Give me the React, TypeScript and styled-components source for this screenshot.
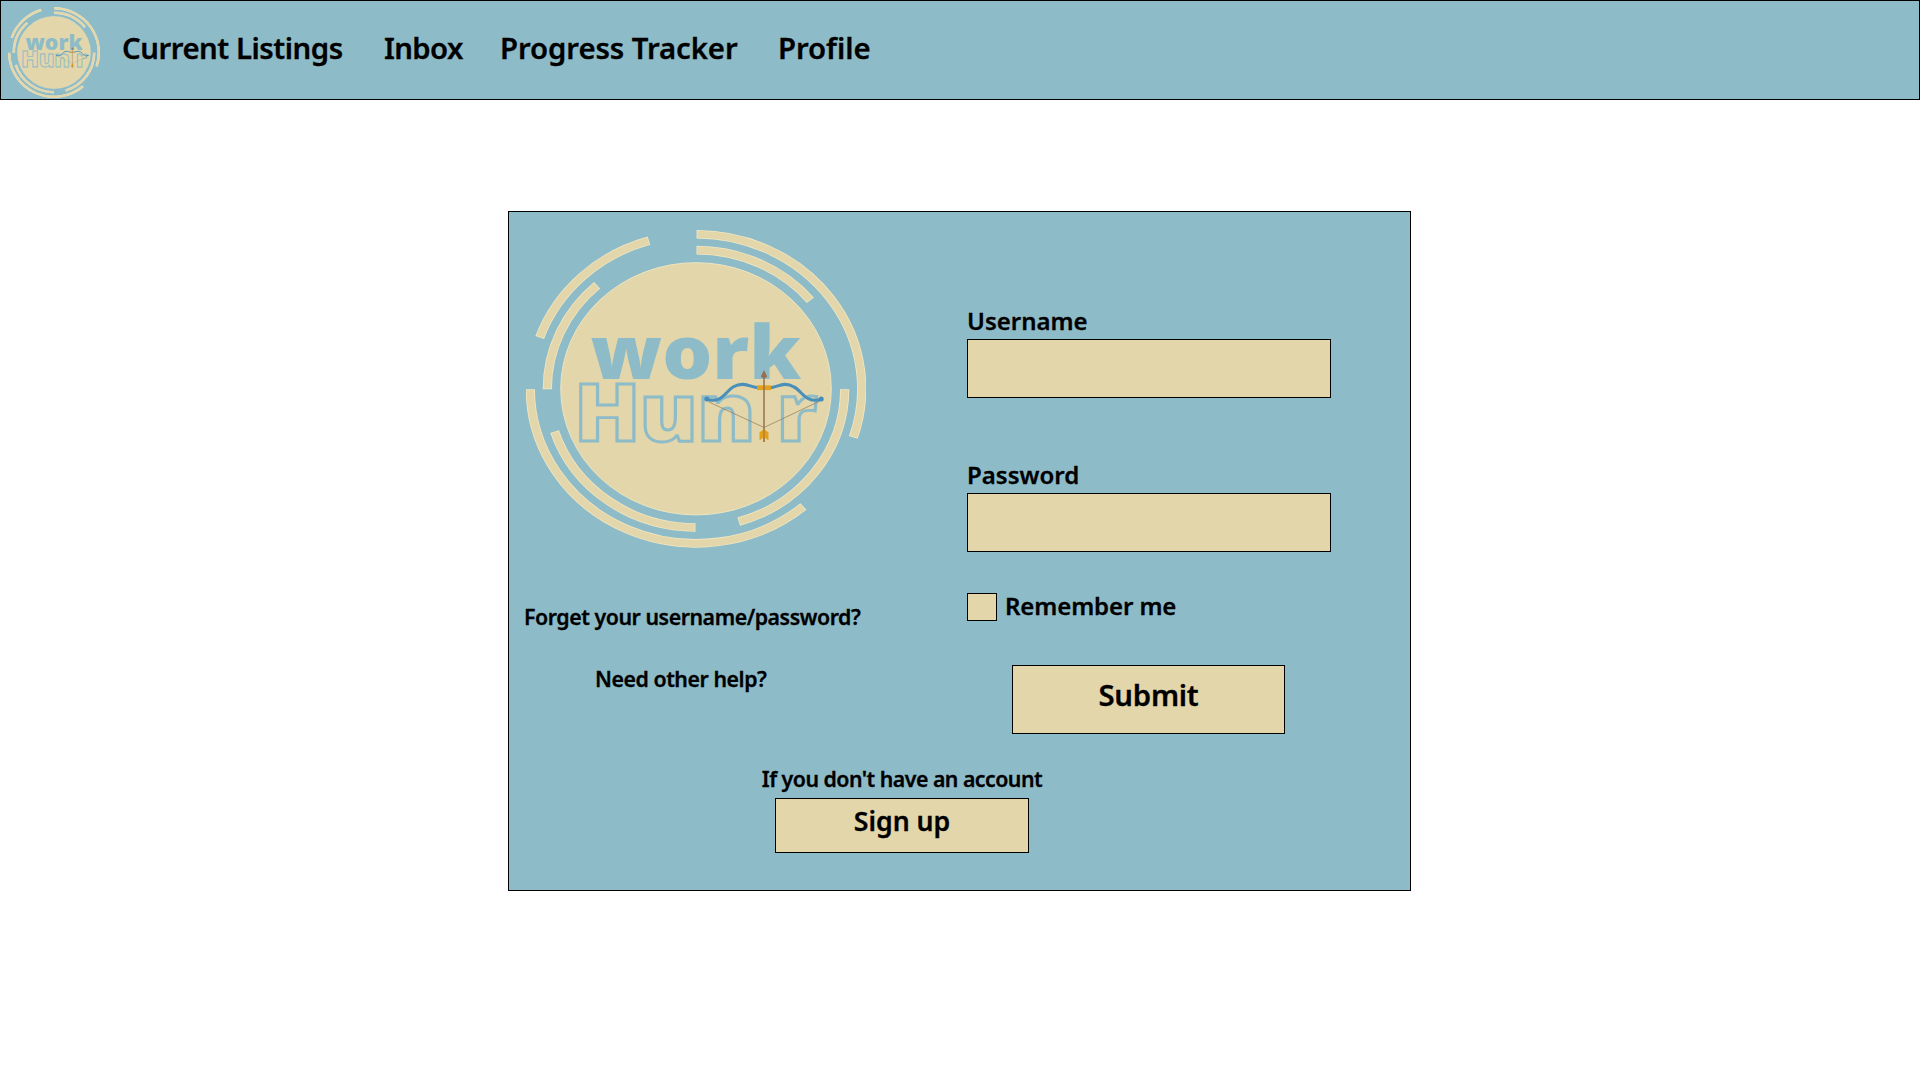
import React from "react";
import styled, { createGlobalStyle } from "styled-components";

const BLUE = "#8ebbc8";
const TAN = "#e2d6aa";
const EDGE = "#f3e8c2";

const GlobalStyle = createGlobalStyle`
  * { box-sizing: border-box; }
  body {
    margin: 0;
    background: #ffffff;
    color: #000000;
    font-family: "Noto Sans", "Open Sans", sans-serif;
    font-weight: 600;
    -webkit-text-stroke: 0.3px #000;
  }
  svg { -webkit-text-stroke: 0; }
`;

const Header = styled.header`
  display: flex;
  align-items: flex-start;
  height: 100px;
  padding: 6px 0 0 7px;
  background: ${BLUE};
  border: 1px solid #000;
`;

const LogoSvg = styled.svg<{ $w: number; $h: number }>`
  display: block;
  flex: none;
  width: ${(p) => p.$w}px;
  height: ${(p) => p.$h}px;
`;

const Wordmark = styled.g`
  font-family: "Open Sans", sans-serif;
  font-weight: 800;
`;

const OutlinedText = styled.text`
  fill: none;
  stroke: ${BLUE};
  stroke-width: 2.9px;
`;

const Nav = styled.nav`
  display: flex;
  padding: 21px 0 0 22px;
`;

const NavLink = styled.a<{ $width: number; $spacing: number }>`
  width: ${(p) => p.$width}px;
  font-size: 29.33px;
  line-height: 41px;
  letter-spacing: ${(p) => p.$spacing}px;
  white-space: nowrap;
`;

const Card = styled.main`
  width: 903px;
  height: 680px;
  margin: 111px 0 0 508px;
  background: ${BLUE};
  border: 1px solid #000;
`;

const Columns = styled.div`
  display: grid;
  grid-template-columns: 458px 1fr;
`;

const Brand = styled.section`
  padding: 18px 0 0 15px;
`;

const LogoFrame = styled.div`
  padding-left: 2px;
`;

const HelpLinks = styled.div`
  display: flex;
  flex-direction: column;
  gap: 32px;
  margin-top: 54.5px;
`;

const HelpLink = styled.a<{ $indent: number }>`
  padding-left: ${(p) => p.$indent}px;
  font-size: 21.33px;
  line-height: 30px;
  letter-spacing: -0.46px;
  white-space: nowrap;
`;

const Form = styled.form`
  display: flex;
  flex-direction: column;
  align-items: flex-start;
  padding-top: 94px;
`;

const Field = styled.label`
  display: flex;
  flex-direction: column;
  gap: 3px;
  margin-bottom: 62px;
  font-size: 24px;
  line-height: 30px;

  & + & { margin-bottom: 41px; }
`;

const TextInput = styled.input`
  width: 364px;
  height: 59px;
  padding: 0 12px;
  font: inherit;
  background: ${TAN};
  border: 1px solid #000;
  border-radius: 0;
  outline: none;
`;

const Remember = styled.label`
  display: flex;
  gap: 8px;
  height: 28px;
  font-size: 24px;
  line-height: 26px;
  letter-spacing: -0.1px;
`;

const CheckBox = styled.input`
  appearance: none;
  width: 30px;
  height: 28px;
  margin: 0;
  background: ${TAN};
  border: 1px solid #000;
`;

const Button = styled.button<{ $w: number; $h: number; $size: number; $spacing?: number }>`
  width: ${(p) => p.$w}px;
  height: ${(p) => p.$h}px;
  padding: 0 0 10px;
  font: inherit;
  font-size: ${(p) => p.$size}px;
  line-height: 36px;
  letter-spacing: ${(p) => p.$spacing ?? 0}px;
  color: #000;
  background: ${TAN};
  border: 1px solid #000;
  border-radius: 0;
`;

const SubmitRow = styled.div`
  display: flex;
  padding: 44px 0 0 45px;
`;

const SignUp = styled.section`
  display: flex;
  flex-direction: column;
  align-items: center;
  gap: 4px;
  width: 280px;
  margin: 30px 0 0 253px;
`;

const Prompt = styled.p`
  margin: 0;
  font-size: 21.33px;
  line-height: 30px;
  letter-spacing: -0.53px;
  white-space: nowrap;
`;

const OUTER = 165.7;
const INNER = 148.7;
const RINGS: [number, number, number][] = [
  [OUTER, 0.2, 108.3],
  [OUTER, 139.6, 269.8],
  [OUTER, 289.4, 343.5],
  [INNER, 0.2, 50.3],
  [INNER, 90.2, 163.3],
  [INNER, 180.2, 252],
  [INNER, 269.8, 318.3],
];

/* Arc between two clockwise angles, measured from twelve o'clock. */
function arc(r: number, from: number, to: number) {
  const pt = (deg: number) => {
    const a = (deg * Math.PI) / 180;
    return `${(r * Math.sin(a)).toFixed(2)} ${(-r * Math.cos(a)).toFixed(2)}`;
  };
  return `M${pt(from)}A${r} ${r} 0 ${to - from > 180 ? 1 : 0} 1 ${pt(to)}`;
}

function Logo({ w, h }: { w: number; h: number }) {
  return (
    <LogoSvg $w={w} $h={h} viewBox="26 30 340 317.5" preserveAspectRatio="none">
      <g transform="translate(196 188.8) scale(1 .9325)" fill="none">
        <circle r="135.3" fill={TAN} stroke={EDGE} strokeWidth="0.9" />
        {RINGS.map(([r, a, b]) => (
          <g key={`${r}-${a}`}>
            <path d={arc(r, a, b)} stroke={EDGE} strokeWidth="9.2" />
            <path d={arc(r, a + 0.3, b - 0.3)} stroke={TAN} strokeWidth="7.6" />
          </g>
        ))}
      </g>
      <Wordmark>
        <text x="90.6" y="178.8" fontSize="74" textLength="210.5" lengthAdjust="spacingAndGlyphs" fill={BLUE}>
          work
        </text>
        <OutlinedText transform="scale(1.1 1)" x="67.2 126.9 179.3 251.7" y="240.9" fontSize="79">
          Hunr
        </OutlinedText>
      </Wordmark>
      <g fill="none" strokeLinecap="round">
        <path d="M209 202L264 227.5L320 201" stroke="#937a5d" strokeWidth="0.7" />
        <path
          d="M206.3 199.3C222 204 226 191 233 187C244 181 250 187 258 187.8M321.5 199.3C306 204 302 191 294 187C284 181 278 187 270 187.8"
          stroke="#4a8fb9"
          strokeWidth="3.1"
        />
        <path d="M257 187.7H271" stroke="#e2a11d" strokeWidth="4.8" strokeLinecap="butt" />
        <path d="M264 176V242" stroke="#97704f" strokeWidth="1.5" strokeLinecap="butt" />
      </g>
      <circle cx="206.8" cy="199" r="2.5" fill="#438dbc" />
      <circle cx="321.2" cy="199" r="2.5" fill="#438dbc" />
      <path d="M264 170L267.2 176.5Q266 178.3 264 178.3Q262 178.3 260.8 176.5Z" fill="#97704f" />
      <path d="M264 229L268.5 232.5V240.5L264 237L259.5 240.5V232.5Z" fill="#e2a11d" />
      <path d="M264 229V242" stroke="#b47a2d" strokeWidth="1.3" />
    </LogoSvg>
  );
}

export default function App() {
  return (
    <>
      <GlobalStyle />
      <Header>
        <Logo w={92} h={91} />
        <Nav>
          <NavLink $width={262} $spacing={-0.47}>Current Listings</NavLink>
          <NavLink $width={116} $spacing={-0.6}>Inbox</NavLink>
          <NavLink $width={278} $spacing={-0.08}>Progress Tracker</NavLink>
          <NavLink $width={100} $spacing={-0.05}>Profile</NavLink>
        </Nav>
      </Header>
      <Card>
        <Columns>
          <Brand>
            <LogoFrame>
              <Logo w={340} h={317.5} />
            </LogoFrame>
            <HelpLinks>
              <HelpLink $indent={0}>Forget your username/password?</HelpLink>
              <HelpLink $indent={71}>Need other help?</HelpLink>
            </HelpLinks>
          </Brand>
          <Form>
            <Field>
              Username
              <TextInput type="text" />
            </Field>
            <Field>
              Password
              <TextInput type="password" />
            </Field>
            <Remember>
              <CheckBox type="checkbox" />
              Remember me
            </Remember>
            <SubmitRow>
              <Button type="button" $w={273} $h={69} $size={29.33} $spacing={-0.25}>Submit</Button>
            </SubmitRow>
          </Form>
        </Columns>
        <SignUp>
          <Prompt>If you don't have an account</Prompt>
          <Button type="button" $w={254} $h={55} $size={26.67}>Sign up</Button>
        </SignUp>
      </Card>
    </>
  );
}
